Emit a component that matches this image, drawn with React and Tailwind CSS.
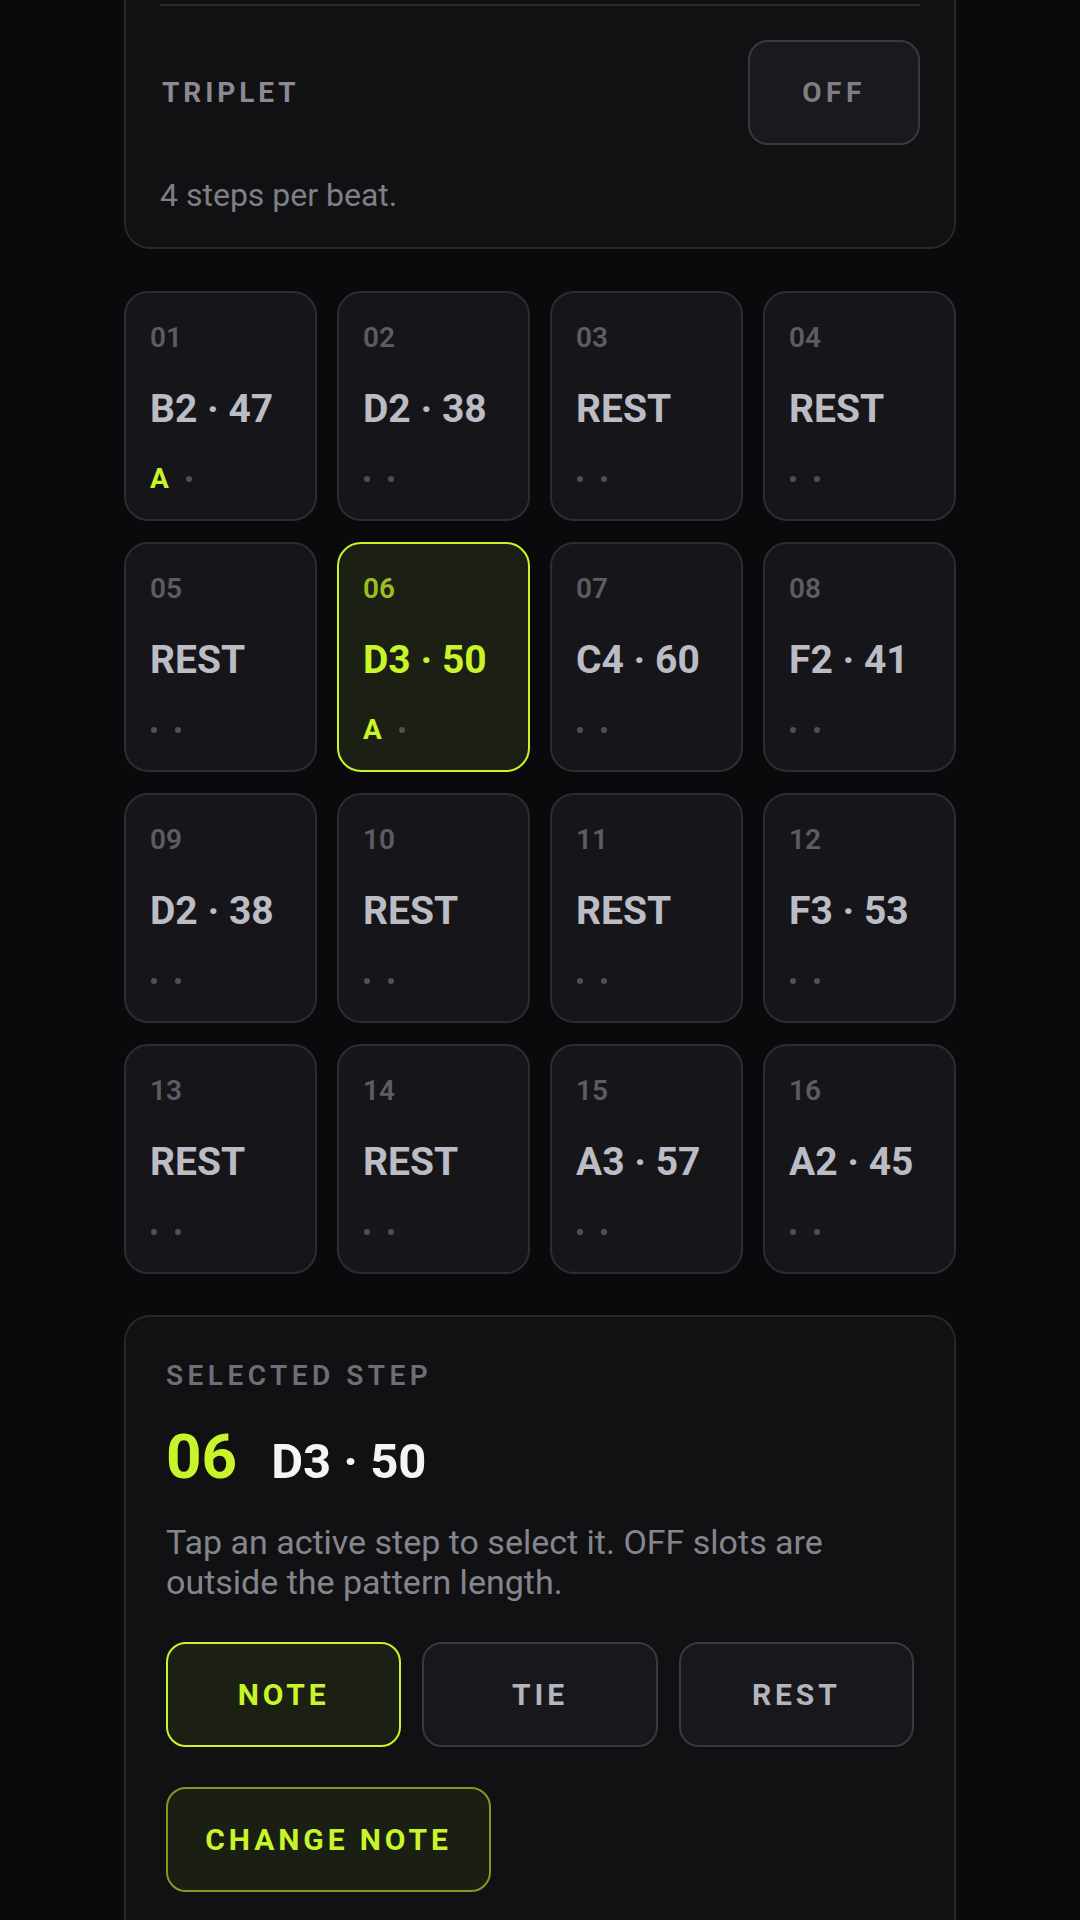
const steps = [
  { n: "01", label: "B2 · 47", accent: true },
  { n: "02", label: "D2 · 38" },
  { n: "03", label: "REST" },
  { n: "04", label: "REST" },
  { n: "05", label: "REST" },
  { n: "06", label: "D3 · 50", accent: true, selected: true },
  { n: "07", label: "C4 · 60" },
  { n: "08", label: "F2 · 41" },
  { n: "09", label: "D2 · 38" },
  { n: "10", label: "REST" },
  { n: "11", label: "REST" },
  { n: "12", label: "F3 · 53" },
  { n: "13", label: "REST" },
  { n: "14", label: "REST" },
  { n: "15", label: "A3 · 57" },
  { n: "16", label: "A2 · 45" },
];

function Dot() {
  return (
    <span className="w-[8px] flex justify-center">
      <span className="w-[6px] h-[6px] rounded-full bg-[#4f4f56]" />
    </span>
  );
}

function StepTile({ step }) {
  const sel = step.selected;
  return (
    <div
      className={`h-[230px] rounded-[24px] border-2 px-[24px] pt-[29px] flex flex-col ${
        sel ? "bg-[#1c2014] border-[#c6f52a]" : "bg-[#16161a] border-[#2c2c31]"
      }`}
    >
      <div className={`text-[28px] leading-[32px] font-semibold ${sel ? "text-[#9cbf1f]" : "text-[#5c5c63]"}`}>
        {step.n}
      </div>
      <div className={`mt-[31px] text-[39px] leading-[48px] font-bold ${sel ? "text-[#c8f52a]" : "text-[#bcbcc4]"}`}>
        {step.label}
      </div>
      <div className="mt-[30px] h-[32px] flex items-center gap-[16px]">
        {step.accent ? (
          <span className="text-[28px] leading-[32px] font-bold text-[#c8f52a]">A</span>
        ) : (
          <Dot />
        )}
        <Dot />
      </div>
    </div>
  );
}

export default function App() {
  return (
    <div className="min-h-screen bg-[#0a0a0c] font-['Roboto',sans-serif] overflow-hidden">
      <div className="w-[832px] mx-auto flex flex-col">
        {/* tarjeta de triplet, recortada arriba por el scroll */}
        <div className="bg-[#111114] border-x-2 border-b-2 border-[#27272c] rounded-b-[26px] px-[34px] pt-[4px] pb-[32px]">
          <div className="h-[2px] bg-[#2a2a2f]" />
          <div className="mt-[34px] flex items-center justify-between">
            <span className="pl-[2px] text-[28px] font-bold tracking-[0.14em] text-[#8a8a92]">TRIPLET</span>
            <button className="w-[172px] h-[105px] rounded-[20px] border-2 border-[#38383e] bg-[#1a1a1e] text-[28px] font-bold tracking-[0.16em] text-[#7e7e86]">
              OFF
            </button>
          </div>
          <p className="mt-[30px] text-[32px] leading-[40px] text-[#7f7f87]">4 steps per beat.</p>
        </div>

        <div className="mt-[42px] grid grid-cols-4 gap-x-[20px] gap-y-[21px]">
          {steps.map((s) => (
            <StepTile key={s.n} step={s} />
          ))}
        </div>

        <div className="mt-[41px] bg-[#111114] border-2 border-b-0 border-[#27272c] rounded-t-[26px] px-[40px] pt-[43px] pb-[80px]">
          <div className="text-[28px] leading-[32px] font-semibold tracking-[0.16em] text-[#6e6e76]">SELECTED STEP</div>
          <div className="mt-[35px] flex items-baseline gap-[34px] leading-[60px]">
            <span className="text-[62px] font-bold text-[#c8f52a]">06</span>
            <span className="text-[49px] font-bold text-[#f4f4f5]">D3 · 50</span>
          </div>
          <p className="mt-[30px] text-[34px] leading-[40px] text-[#85858d]">
            Tap an active step to select it. OFF slots are outside the pattern length.
          </p>
          <div className="mt-[40px] grid grid-cols-3 gap-[21px]">
            <button className="h-[105px] rounded-[20px] border-2 border-[#c6f52a] bg-[#1c2014] text-[30px] font-bold tracking-[0.13em] text-[#c8f52a]">
              NOTE
            </button>
            <button className="h-[105px] rounded-[20px] border-2 border-[#38383e] bg-[#18181c] text-[30px] font-bold tracking-[0.13em] text-[#b4b4bc]">
              TIE
            </button>
            <button className="h-[105px] rounded-[20px] border-2 border-[#38383e] bg-[#18181c] text-[30px] font-bold tracking-[0.13em] text-[#b4b4bc]">
              REST
            </button>
          </div>
          <button className="mt-[40px] w-[325px] h-[105px] rounded-[20px] border-2 border-[#7d9a22] bg-[#1a1e13] text-[30px] font-bold tracking-[0.13em] text-[#c8f52a]">
            CHANGE NOTE
          </button>
        </div>
      </div>
    </div>
  );
}
